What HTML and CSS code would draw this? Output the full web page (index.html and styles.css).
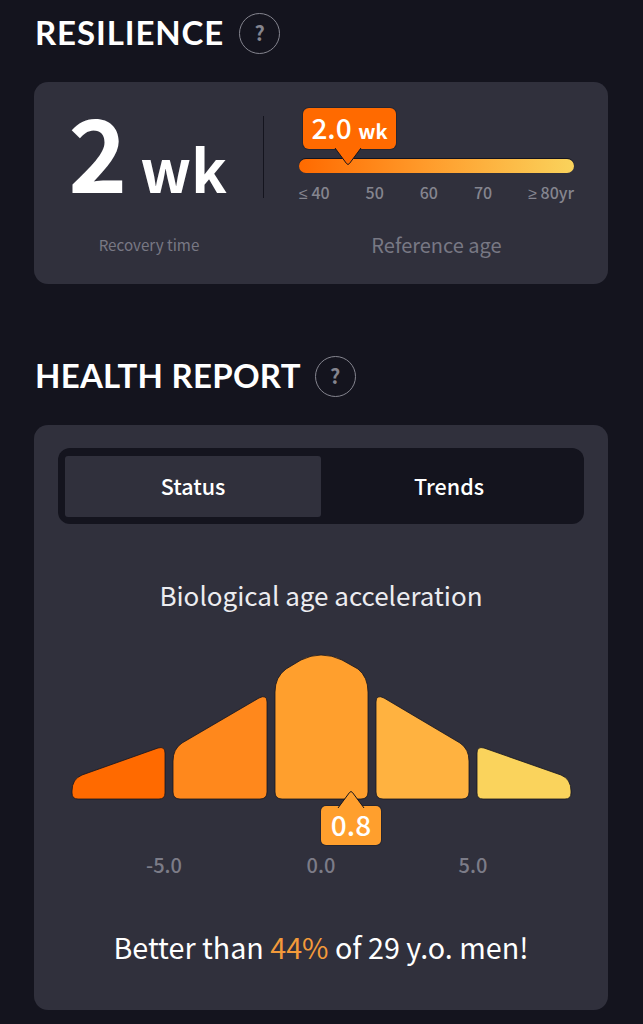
FILE: index.html
```html
<!DOCTYPE html>
<html lang="en">
<head>
  <meta charset="UTF-8">
  <meta name="viewport" content="width=device-width, initial-scale=1.0">
  <title>Health Report</title>
  <link rel="stylesheet" href="styles.css">
</head>
<body>
  <div class="section-head first">
    <h1>RESILIENCE</h1>
    <span class="help">?</span>
  </div>
  <div class="card resilience">
    <div class="stat">
      <span class="stat-num">2</span>
      <span class="stat-unit">wk</span>
    </div>
    <div class="scale">
      <div class="track">
        <div class="bubble">
          <span class="bubble-num">2.0</span> <span class="bubble-unit">wk</span>
          <svg class="pointer-down" width="28" height="19" viewBox="0 0 28 19"><path fill="#ff6a00" stroke="#14141e" d="M1 0L12.5 15.5Q14 17.5 15.5 15.5L27 0"/></svg>
        </div>
      </div>
      <div class="ticks">
        <span><span class="sym">≤</span> 40</span><span>50</span><span>60</span><span>70</span><span><span class="sym">≥</span> 80yr</span>
      </div>
    </div>
    <div class="label-left">Recovery time</div>
    <div class="label-right">Reference age</div>
  </div>

  <div class="section-head second">
    <h1>HEALTH REPORT</h1>
    <span class="help">?</span>
  </div>
  <div class="card report">
    <div class="tabs">
      <div class="tab active">Status</div>
      <div class="tab">Trends</div>
    </div>
    <h2>Biological age acceleration</h2>
    <div class="chart">
      <svg class="bars" width="504" height="152" viewBox="70 650 504 152">
        <path fill="#ff6a00" d="M72 791Q72 779 82 775L158 748Q165 746 165 753L165 793Q165 799 159 799L78 799Q72 799 72 793Z"/>
        <path fill="#ff881c" d="M173 761Q173 749 182 743L259 698Q267 694 267 702L267 792Q267 799 260 799L180 799Q173 799 173 792Z"/>
        <path fill="#ff9f2d" d="M275 692Q275 677 286 669L301 660Q311 655 321 655Q332 655 342 660L358 669Q368 677 368 692L368 792Q368 799 361 799L282 799Q275 799 275 792Z"/>
        <path fill="#ffb240" d="M376 702Q376 694 384 698L460 743Q469 749 469 761L469 792Q469 799 462 799L383 799Q376 799 376 792Z"/>
        <path fill="#fad35c" d="M477 753Q477 746 484 748L561 775Q571 779 571 791L571 793Q571 799 565 799L483 799Q477 799 477 793Z"/>
      </svg>
      <div class="marker">
        0.8
        <svg class="pointer-up" width="28" height="19" viewBox="0 0 28 19"><path fill="#ff9f2d" stroke="#14141e" d="M1 19L12.5 3.5Q14 1.5 15.5 3.5L27 19"/></svg>
      </div>
    </div>
    <div class="axis">
      <span class="axis-low">-5.0</span>
      <span class="axis-mid">0.0</span>
      <span class="axis-high">5.0</span>
    </div>
    <p class="summary">Better than <span class="pct">44%</span> of 29 y.o. men!</p>
  </div>
</body>
</html>
```

FILE: styles.css
```css
* { box-sizing: border-box; }
body { font-family: "Noto Sans CJK JP", "Noto Sans", sans-serif; background: #14141e; color: #fff; margin: 0; height: 1024px; padding: 0 35px 0 34px; overflow: hidden; }

.section-head { display: flex; align-items: center; gap: 15px; height: 42px; padding-left: 1px; }
.section-head.first { margin-top: 12px; }
.section-head.second { margin-top: 71px; gap: 14px; }
.section-head h1 { font-family: Lato, sans-serif; font-size: 33px; font-weight: 700; line-height: 40px; margin: 0 0 3px; letter-spacing: 0.25px; }
.section-head.first h1 { letter-spacing: 0.9px; }
.help { width: 41px; height: 41px; border: 1.5px solid #85858f; border-radius: 50%; color: #85858f; font-size: 20px; font-weight: 700; line-height: 37px; text-align: center; }

.card { background: #30303c; border-radius: 14px; }

.resilience { display: grid; grid-template-columns: 230px 1fr; grid-template-rows: 97px 1fr; height: 202px; margin-top: 28px; padding: 26px 34px 0 0; }
.stat { display: flex; align-items: baseline; justify-content: center; gap: 13px; height: 82px; margin-top: 8px; padding-right: 2px; border-right: 1px solid #14141e; }
.stat-num { font-size: 100px; font-weight: 700; line-height: 68px; }
.stat-unit { font-size: 59px; font-weight: 700; line-height: 40px; }

.scale { padding: 51px 0 0 35px; }
.track { position: relative; height: 14px; border-radius: 7px; background: linear-gradient(to right, #ff6a00, #ff9a2a 45%, #fad35c); box-shadow: 0 -1px 0 #14141e; }
.bubble { position: absolute; left: 4px; bottom: 24px; width: 93px; height: 41px; border-radius: 6px; background: #ff6a00; line-height: 39px; text-align: center; white-space: nowrap; box-shadow: 0 0 0 1px rgba(20, 20, 30, 0.35); }
.pointer-down { position: absolute; left: 30.5px; top: 40px; display: block; }
.bubble-num { font-size: 28px; font-weight: 500; }
.bubble-unit { font-size: 20px; font-weight: 700; margin-left: 3px; }
.ticks { display: flex; justify-content: space-between; margin-top: 9px; color: #85858f; font-size: 16px; font-weight: 500; line-height: 20px; }
.sym { font-family: "Liberation Sans", sans-serif; }

.label-left { color: #787884; font-size: 15.2px; line-height: 24px; padding-top: 27px; text-align: center; }
.label-right { color: #787884; font-size: 20px; line-height: 30px; padding: 25px 0 0 35px; text-align: center; }

.report { height: 585px; margin-top: 28px; padding: 23px 24px 0; }
.tabs { display: flex; height: 76px; padding: 8px 7px 7px; border-radius: 12px; background: #14141e; }
.tab { flex: 1; font-size: 21.5px; font-weight: 500; line-height: 59px; height: 61px; text-align: center; border-radius: 3px; }
.tab.active { background: #30303c; }
.report h2 { color: #ececf0; font-size: 26px; font-weight: 400; line-height: 40px; margin: 51px 0 0; text-align: center; }

.chart { position: relative; height: 195px; margin: 35px 0 0 12px; }
.bars { display: block; }
.bars path { stroke: #14141e; stroke-width: 0.8; }
.marker { position: absolute; left: 251px; top: 156px; width: 60px; height: 39px; border-radius: 5px; background: #ff9f2d; font-size: 28px; font-weight: 500; line-height: 37px; text-align: center; box-shadow: 0 0 0 1px rgba(20, 20, 30, 0.35); }
.pointer-up { position: absolute; left: 15.5px; top: -17.5px; display: block; }

.axis { display: flex; height: 30px; margin-top: 5px; color: #7c7c88; font-size: 20px; font-weight: 500; line-height: 30px; }
.axis span { text-align: center; width: 60px; }
.axis-low { margin-left: 76px; }
.axis-mid { margin-left: 97px; }
.axis-high { margin-left: 92px; }

.summary { font-size: 28.7px; line-height: 40px; margin: 47px 0 0; text-align: center; white-space: nowrap; }
.pct { color: #f39a3a; }
```
